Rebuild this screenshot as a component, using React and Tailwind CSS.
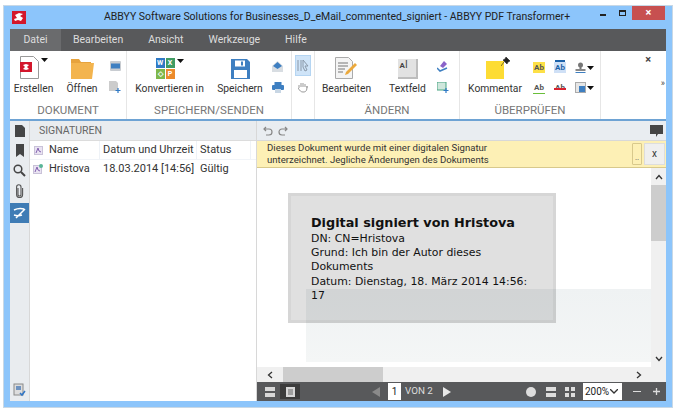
const ui = { fontFamily: 'Roboto, "Open Sans", sans-serif' };

function Big({ label, w, ml = 0, children }) {
  return (
    <div className="flex flex-col items-center shrink-0" style={{ width: w, marginLeft: ml }}>
      <div className="h-[24px] flex items-end justify-center">{children}</div>
      <div className="mt-[2px] text-[10.300px] leading-[16px] text-[#333] whitespace-nowrap">{label}</div>
    </div>
  );
}

function Group({ label, w, children }) {
  return (
    <div className="relative h-full shrink-0 flex flex-col border-r border-[#e6e6e6]" style={{ width: w }}>
      <div className="flex h-[51px] items-start pt-[4px]">{children}</div>
      <div className="text-center text-[11.500px] leading-[16px] text-[#777]">{label}</div>
    </div>
  );
}

function Stack({ w, ml = 0, children }) {
  return (
    <div className="flex flex-col items-center gap-[10px] shrink-0 pt-[6px]" style={{ width: w, marginLeft: ml }}>
      {children}
    </div>
  );
}

function Caret() {
  return <svg width="7" height="4" viewBox="0 0 7 4"><path d="M0 0h7L3.500 4z" fill="#111" /></svg>;
}

function Logo() {
  return (
    <svg width="14" height="13" viewBox="0 0 14 13">
      <rect width="14" height="13" fill="#d3172c" />
      <path d="M3 4l4-2 4 1-3 2 3 2-2 3-3-1-3 1-1-2 3-1z" fill="#fff" />
    </svg>
  );
}

function Sig({ check }) {
  return (
    <svg width="10" height="10" viewBox="0 0 10 10">
      <rect x="0.500" y="1.500" width="8" height="8" fill="#e9e3f2" stroke="#c9c2d8" />
      <path d="M2 8l2-5 1 3 2 1" fill="none" stroke="#8462b0" />
      {check && <circle cx="8" cy="2" r="2" fill="#58b596" />}
    </svg>
  );
}

function Ab({ bg, color = "#1d62a8", line, strike, dots }) {
  return (
    <span className="relative inline-flex w-[12px] h-[11px] items-center justify-center text-[8px] font-bold leading-none" style={{ background: bg, color }}>
      Ab
      {line && <span className="absolute left-0 right-0 bottom-[-1px] h-[1.500px]" style={{ background: line }} />}
      {strike && <span className="absolute left-0 right-0 top-[6px] h-[1.500px]" style={{ background: strike }} />}
      {dots && <span className="absolute left-[1px] right-[1px] top-[-2px] h-[1.500px] bg-[#1d62a8]" />}
    </span>
  );
}

function Rail() {
  return (
    <div className="w-[20px] shrink-0 bg-[#e9ecef] border-r border-[#d8d8d8] flex flex-col items-center">
      <div className="h-[82px] w-full flex flex-col items-center pt-[4px] gap-[7px]">
        <svg width="10" height="12" viewBox="0 0 10 12"><path d="M0 0h7l3 3v9H0z" fill="#454545" /></svg>
        <svg width="8" height="13" viewBox="0 0 8 13"><path d="M0 0h8v13L4 10 0 13z" fill="#454545" /></svg>
        <svg width="13" height="13" viewBox="0 0 13 13"><circle cx="5" cy="5" r="3.800" fill="none" stroke="#454545" strokeWidth="1.500" /><path d="M8 8l4 4" stroke="#454545" strokeWidth="2" /></svg>
        <svg width="9" height="14" viewBox="0 0 9 14"><path d="M3 4v6.500a1.500 1.500 0 0 0 3 0V3a2.200 2.200 0 0 0-4.400 0v7.500a3 3 0 0 0 6 0V4" fill="none" stroke="#555" strokeWidth="1.100" /></svg>
      </div>
      <div className="w-full h-[20px] bg-[#3f7cb5] flex items-center justify-center">
        <svg width="14" height="12" viewBox="0 0 14 12"><path d="M1 3c4-2 6-2 10-1M1 8c3 1 5 1 8 0M3 11l9-9" fill="none" stroke="#fff" strokeWidth="1.500" /></svg>
      </div>
      <div className="flex-1 w-full flex flex-col justify-end items-center pb-[4px]">
        <svg width="13" height="14" viewBox="0 0 13 14">
          <rect x="1" y="1" width="9" height="11" fill="#ddd" stroke="#8a8a8a" />
          <rect x="3" y="3" width="5" height="4" fill="#6f93c0" />
          <path d="M7 10l2 2 3-4" fill="none" stroke="#2f75c5" strokeWidth="1.500" />
        </svg>
      </div>
    </div>
  );
}

function SignaturePanel() {
  return (
    <div className="w-[227px] shrink-0 flex flex-col text-[11px] text-[#333] border-r border-[#d8d8d8]">
      <div className="h-[20px] bg-[#e9ecef] pl-[9px] text-[10.500px] leading-[20px] text-[#666] border-b border-[#dcdcdc]">SIGNATUREN</div>
      <div className="flex h-[19px] items-center border-b border-[#f1f4f8]">
        <div className="w-[19px] pl-[4px] flex"><Sig /></div>
        <div className="w-[51px] border-r border-[#eef2f7] leading-[18px]">Name</div>
        <div className="w-[97px] pl-[3px] border-r border-[#eef2f7] leading-[18px] whitespace-nowrap">Datum und Uhrzeit</div>
        <div className="w-[54px] pl-[3px] border-r border-[#eef2f7] leading-[18px]">Status</div>
      </div>
      <div className="flex h-[18px] items-center">
        <div className="w-[19px] pl-[3px] flex"><Sig check /></div>
        <div className="w-[51px]">Hristova</div>
        <div className="w-[97px] pl-[3px] whitespace-nowrap">18.03.2014 [14:56]</div>
        <div className="pl-[3px]">Gültig</div>
      </div>
    </div>
  );
}

function DocView() {
  return (
    <div className="flex-1 flex min-h-0">
      <div className="flex-1 flex flex-col min-w-0">
        <div className="relative flex-1 bg-white overflow-hidden">
          {/* page content sits on a free canvas */}
          <div className="absolute left-[49px] top-[121px] w-[346px] h-[73px] bg-gradient-to-b from-[#eff2f3] to-[#f4f6f6]" />
          <div className="absolute left-[31px] top-[25px] w-[268px] h-[130px] bg-black/12 bg-clip-padding border-[3px] border-black/16 pl-[20px] pt-[18px] text-[#111]" style={{ fontFamily: '"DejaVu Sans", sans-serif' }}>
            <div className="text-[12.800px] leading-[18px] font-bold whitespace-nowrap">Digital signiert von Hristova</div>
            <div className="text-[10.900px] leading-[14.200px] w-[225px]">
              DN: CN=Hristova<br />Grund: Ich bin der Autor dieses Dokuments<br />Datum: Dienstag, 18. März 2014 14:56: 17
            </div>
          </div>
        </div>
        <div className="h-[15px] bg-[#f0f0f0] flex items-center">
          <div className="w-[26px] flex justify-center">
            <svg width="6" height="8" viewBox="0 0 6 8"><path d="M5 1L1.500 4 5 7" fill="none" stroke="#333" strokeWidth="1.300" /></svg>
          </div>
          <div className="w-[100px] h-full bg-[#cdcdcd]" />
          <div className="flex-1 flex justify-end pr-[9px]">
            <svg width="6" height="8" viewBox="0 0 6 8"><path d="M1 1l3.500 3L1 7" fill="none" stroke="#333" strokeWidth="1.300" /></svg>
          </div>
        </div>
      </div>
      <div className="w-[15px] bg-[#f0f0f0] flex flex-col">
        <div className="h-[17px] flex items-center justify-center">
          <svg width="8" height="6" viewBox="0 0 8 6"><path d="M1 5l3-3.500L7 5" fill="none" stroke="#333" strokeWidth="1.300" /></svg>
        </div>
        <div className="h-[56px] bg-[#cdcdcd]" />
        <div className="flex-1 flex items-end justify-center pb-[20px]">
          <svg width="8" height="6" viewBox="0 0 8 6"><path d="M1 1l3 3.500L7 1" fill="none" stroke="#333" strokeWidth="1.300" /></svg>
        </div>
      </div>
    </div>
  );
}

function StatusBar() {
  return (
    <div className="h-[19px] bg-[#58595b] flex items-center text-white">
      <div className="w-[23px] pl-[2px] flex justify-center">
        <svg width="10" height="10" viewBox="0 0 10 10"><rect width="10" height="4" fill="#d8d8d8" /><rect y="6" width="10" height="4" fill="#d8d8d8" /></svg>
      </div>
      <div className="w-[20px] h-[15px] bg-[#3c3c3c] flex items-center justify-center">
        <svg width="9" height="10" viewBox="0 0 9 10"><rect width="9" height="10" fill="#d8d8d8" /><path d="M2 3h5M2 5h5M2 7h5" stroke="#666" /></svg>
      </div>
      <svg className="ml-[72px]" width="8" height="10" viewBox="0 0 8 10"><path d="M8 0v10L0 5z" fill="#8a8a8a" /></svg>
      <div className="ml-[8px] w-[13px] h-[17px] bg-white text-[#222] text-[10px] leading-[17px] text-center">1</div>
      <span className="ml-[4px] text-[9.800px] text-[#ddd] whitespace-nowrap">VON 2</span>
      <svg className="ml-[10px]" width="8" height="10" viewBox="0 0 8 10"><path d="M0 0v10l8-5z" fill="#e8e8e8" /></svg>
      <div className="flex-1" />
      <svg width="10" height="10" viewBox="0 0 10 10"><circle cx="5" cy="5" r="5" fill="#ddd" /></svg>
      <svg className="ml-[10px]" width="10" height="10" viewBox="0 0 10 10"><rect width="10" height="4" fill="#ddd" /><rect y="6" width="10" height="4" fill="#ddd" /></svg>
      <svg className="ml-[9px]" width="10" height="10" viewBox="0 0 10 10"><path d="M0 0h4v4H0zM6 0h4v4H6zM0 6h4v4H0zM6 6h4v4H6z" fill="#ddd" /></svg>
      <div className="ml-[8px] w-[39px] h-[17px] bg-white flex items-center text-[#222] text-[10px] pl-[2px] overflow-hidden">
        <span className="w-[25px] overflow-hidden whitespace-nowrap">200%</span>
        <svg width="8" height="5" viewBox="0 0 8 5"><path d="M0 0l4 4 4-4" fill="none" stroke="#333" strokeWidth="1.300" /></svg>
      </div>
      <div className="ml-[11px] w-[8px] h-[1.500px] bg-[#ddd]" />
      <svg className="ml-[11px] mr-[5px]" width="9" height="9" viewBox="0 0 9 9"><path d="M4.500 1v7M1 4.500h7" stroke="#ddd" strokeWidth="1.300" /></svg>
    </div>
  );
}

export default function App() {
  return (
    <div className="w-[680px] h-[414px] bg-white pl-[3px] pt-[5px] overflow-hidden" style={ui}>
      <div className="w-[670px] h-[403px] bg-[#8cc5fb] border border-[#c8d8e6] flex flex-col px-[6px] pb-[6px]">
        {/* Title bar */}
        <div className="h-[23px] shrink-0 flex items-center relative">
          <div className="pl-[2px]"><Logo /></div>
          <div className="absolute left-0 right-0 top-[2px] text-center text-[10.500px] leading-[18px] text-[#222] whitespace-nowrap pr-[2px]">
            ABBYY Software Solutions for Businesses_D_eMail_commented_signiert - ABBYY PDF Transformer+
          </div>
          <div className="ml-auto flex items-start self-start mr-[1px] relative">
            <div className="w-[6px] h-[2px] bg-[#222] mt-[8px] mr-[13px]" />
            <div className="w-[7px] h-[6px] border border-[#222] border-t-2 mt-[4px] mr-[6px]" />
            <div className="w-[33px] h-[14px] bg-[#c75050] text-white text-[11px] leading-[14px] text-center font-bold">×</div>
          </div>
        </div>

        {/* Menu */}
        <div className="h-[22px] shrink-0 bg-[#58595b] flex items-center text-[10.500px] text-[#ddd]">
          <div className="w-[51px] h-full bg-[#6a6b6d] leading-[22px] text-center">Datei</div>
          <div className="ml-[12px]">Bearbeiten</div>
          <div className="ml-[25px]">Ansicht</div>
          <div className="ml-[25px]">Werkzeuge</div>
          <div className="ml-[25px]">Hilfe</div>
        </div>

        {/* Ribbon */}
        <div className="h-[70px] shrink-0 bg-white border-b-2 border-[#6ea3d4] flex">
          <Group label="DOKUMENT" w={117}>
            <Big label="Erstellen" w={39} ml={4}>
              <div className="flex items-start gap-[2px]">
                <svg width="19" height="23" viewBox="0 0 19 23"><path d="M0.500 0.500h13l5 5v17H.5z" fill="#fff" stroke="#999" /><rect x="0" y="6" width="12" height="10" fill="#d3172c" /><path d="M3 9l3-1 3 1-2 2 2 2-3 1-3-1 2-2z" fill="#fff" /></svg>
                <div className="mt-[2px]"><Caret /></div>
              </div>
            </Big>
            <Big label="Öffnen" w={34} ml={12}>
              <svg width="23" height="20" viewBox="0 0 23 20"><path d="M0 0h8l2 3h10v3H0z" fill="#e7a33d" /><path d="M0 4h23l-2 16H0z" fill="#f3b44e" /></svg>
            </Big>
            <Stack w={20} ml={6}>
              <svg width="11" height="10" viewBox="0 0 11 10"><rect width="11" height="10" rx="1" fill="#c8ccd1" /><rect x="1" y="2.500" width="9" height="5" fill="#3e7fc1" /></svg>
              <svg width="12" height="12" viewBox="0 0 12 12"><path d="M0 0h7l2 2v8H0z" fill="#ccc" /><path d="M9 7v5M6.500 9.500h5" stroke="#2f79c5" strokeWidth="1.200" /></svg>
            </Stack>
          </Group>
          <Group label="SPEICHERN/SENDEN" w={165}>
            <Big label="Konvertieren in" w={71} ml={7}>
              <div className="flex items-start gap-[2px]">
                <div className="grid grid-cols-2 gap-[1px] text-[7px] font-bold text-white leading-[10px] text-center w-[19px]">
                  <span className="bg-[#2f79c5]">W</span>
                  <span className="bg-[#3f9b63]">X</span>
                  <span className="bg-[#7fb84a]">◇</span>
                  <span className="bg-[#ec8a2b]">P</span>
                </div>
                <div className="mt-[1px]"><Caret /></div>
              </div>
            </Big>
            <Big label="Speichern" w={46} ml={12}>
              <svg width="19" height="20" viewBox="0 0 19 20"><path d="M0 0h16l3 3v17H0z" fill="#3e7fc1" /><rect x="4" y="1.500" width="10" height="6" fill="#fff" /><rect x="10" y="2.500" width="2" height="4" fill="#3e7fc1" /><rect x="3" y="11" width="13" height="8" fill="#fff" /></svg>
            </Big>
            <Stack w={17} ml={6}>
              <svg width="11" height="11" viewBox="0 0 11 11"><path d="M0 5l5.500-5L11 5v6H0z" fill="#d8dde2" /><path d="M1 5l4.500-4L10 5 5.500 8z" fill="#3e7fc1" /></svg>
              <svg width="12" height="11" viewBox="0 0 12 11"><rect x="2.500" width="7" height="3" fill="#3e7fc1" /><rect y="3" width="12" height="5" rx="1" fill="#3e7fc1" /><rect x="3" y="7" width="6" height="4" fill="#c8d6e4" /></svg>
            </Stack>
          </Group>
          <div className="h-full w-[23px] shrink-0 border-r border-[#e6e6e6] flex flex-col items-center pt-[4px]">
            <div className="w-[16px] h-[21px] bg-[#cfe4f8] border border-[#b5d5f2] flex items-center justify-center">
              <svg width="12" height="14" viewBox="0 0 12 14"><path d="M1 1v11M4 1v11M6 1l5 6H8l2 4-2 1-2-4z" fill="none" stroke="#8a98a8" /></svg>
            </div>
            <svg className="mt-[6px]" width="11" height="11" viewBox="0 0 11 11"><path d="M1 6V3m2 2V1m2 4V1m2 4V2m2 4V4c0 5-1 6-4 6-2 0-3-1-5-4" fill="none" stroke="#999" /></svg>
          </div>
          <Group label="ÄNDERN" w={145}>
            <Big label="Bearbeiten" w={49} ml={7}>
              <svg width="23" height="22" viewBox="0 0 23 22"><path d="M0.500 0.500h13l4 4v17H.5z" fill="#f4f4f4" stroke="#aaa" /><path d="M3 6h10M3 9h10M3 12h7M3 15h5" stroke="#777" /><path d="M10 18l1-3 9-9 2 2-9 9z" fill="#eca93c" /></svg>
            </Big>
            <Big label="Textfeld" w={37} ml={18}>
              <div className="relative w-[20px] h-[20px] bg-[#e2e2e2] border-r-2 border-b-2 border-[#bdbdbd] text-[8px] font-bold text-[#444] leading-[12px] pl-[2px]">A<span className="font-normal text-[10px]">I</span></div>
            </Big>
            <Stack w={17} ml={8}>
              <svg width="11" height="11" viewBox="0 0 11 11"><path d="M3 5l4-5 3 3-4 4z" fill="#8a63c9" /><path d="M0 7l3 3 7-3" fill="none" stroke="#3e7fc1" strokeWidth="1.500" /></svg>
              <svg width="12" height="11" viewBox="0 0 12 11"><rect width="9" height="8" fill="#cfe7dc" stroke="#4ba583" /><path d="M9 6v5M6.500 8.500h5" stroke="#2f79c5" strokeWidth="1.200" /></svg>
            </Stack>
          </Group>
          <Group label="ÜBERPRÜFEN" w={141}>
            <Big label="Kommentar" w={58} ml={6}>
              <div className="relative">
                <div className="w-[18px] h-[18px] bg-[#fddc34]" />
                <svg className="absolute right-[-6px] top-[-4px]" width="9" height="9" viewBox="0 0 9 9"><path d="M5 0l4 4-2 1-1 2-4-4 2-1zM3 5L0 9" fill="#222" stroke="#222" strokeWidth=".6" /></svg>
              </div>
            </Big>
            <div className="ml-[9px] grid grid-cols-[21px_21px_auto] gap-y-[9px] pt-[7px] items-center">
              <Ab bg="#fde047" color="#555" />
              <Ab bg="#cfe0f6" dots />
              <div className="flex items-center gap-[1px]">
                <svg width="11" height="11" viewBox="0 0 11 11"><circle cx="5.500" cy="3" r="2.500" fill="#777" /><rect x="4.500" y="4" width="2" height="3" fill="#777" /><rect x="0.500" y="7" width="10" height="2" fill="#888" /><rect x="0.500" y="10" width="10" height="1" fill="#3e7fc1" /></svg>
                <Caret />
              </div>
              <Ab bg="transparent" color="#555" line="#6abf3a" />
              <Ab bg="transparent" color="#555" strike="#d8232f" />
              <div className="flex items-center gap-[1px]">
                <svg width="11" height="11" viewBox="0 0 11 11"><rect x=".5" y=".5" width="10" height="10" fill="#e6e6e6" stroke="#aaa" /><rect x="4" y="4" width="6" height="6" fill="#3e7fc1" /></svg>
                <Caret />
              </div>
            </div>
          </Group>
          <div className="flex-1 relative">
            <span className="absolute right-[15px] top-[2px] text-[11px] leading-[14px] font-bold text-[#444]">×</span>
            <span className="absolute right-[1px] top-[25px] text-[9px] leading-[14px] text-[#444]">»</span>
          </div>
        </div>

        {/* Body */}
        <div className="flex-1 min-h-0 bg-white flex">
          <Rail />
          <SignaturePanel />
          <div className="flex-1 min-w-0 flex flex-col">
            <div className="h-[20px] shrink-0 bg-[#e9edf1] border-b border-[#d8d8d8] flex items-center pl-[6px] pr-[3px] gap-[5px]">
              <svg width="10" height="10" viewBox="0 0 10 10"><path d="M3 1L1 3l2 2M1 3h5a3 3 0 0 1 0 6H3" fill="none" stroke="#888" strokeWidth="1.200" /></svg>
              <svg width="10" height="10" viewBox="0 0 10 10"><path d="M7 1l2 2-2 2M9 3H4a3 3 0 0 0 0 6h3" fill="none" stroke="#888" strokeWidth="1.200" /></svg>
              <svg className="ml-auto" width="13" height="12" viewBox="0 0 13 12"><path d="M0 0h13v9H8l-2 3V9H0z" fill="#454545" /></svg>
            </div>
            <div className="h-[27px] shrink-0 bg-[#fdf0b5] border-b border-[#d8c98c] flex items-center pl-[10px] pr-[1px] text-[9.600px] leading-[12px] text-[#333]">
              <div className="whitespace-nowrap">Dieses Dokument wurde mit einer digitalen Signatur<br />unterzeichnet. Jegliche Änderungen des Dokuments</div>
              <div className="ml-auto w-[10px] h-[22px] border border-[#d8c98c] rounded-[1px] text-[8px] text-center leading-[28px] text-[#555] mr-[2px]">..</div>
              <div className="w-[21px] h-[22px] bg-[#efefef] border border-[#ddd] text-center leading-[20px] text-[10px]">x</div>
            </div>
            <DocView />
            <StatusBar />
          </div>
        </div>
      </div>
    </div>
  );
}
